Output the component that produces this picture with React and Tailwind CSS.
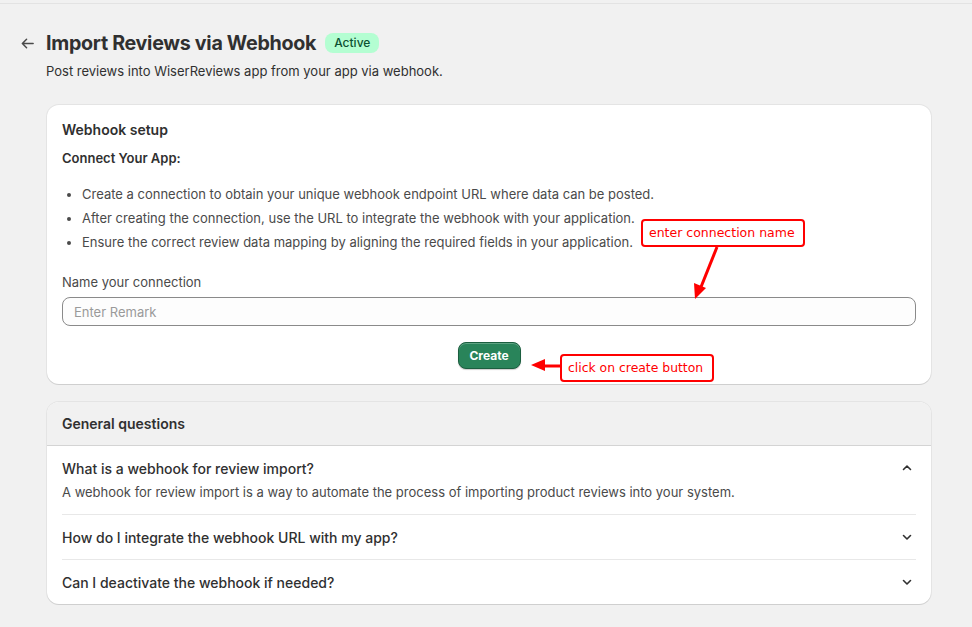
import React from "react";

const Chevron = ({ up }) => (
  <svg width="12" height="12" viewBox="0 0 12 12" fill="none" stroke="#303030" strokeWidth="1.6" strokeLinecap="round" strokeLinejoin="round">
    {up ? <path d="M2.5 7.5L6 4l3.5 3.5" /> : <path d="M2.5 4.5L6 8l3.5-3.5" />}
  </svg>
);

export default function App() {
  return (
    <div className="relative min-h-[627px] w-[972px] bg-[#f1f1f1] text-[#303030] text-[13px]" style={{ fontFamily: "Inter, 'Noto Sans', sans-serif" }}>
      <div className="h-[4px] border-b border-[#e3e3e3]" />
      <div className="pl-[20px] pr-[41px] pt-[27px]">
        <div className="flex items-center h-[24px]">
          <svg width="15" height="15" viewBox="0 0 16 16" fill="none" stroke="#4a4a4a" strokeWidth="1.6" strokeLinecap="round" strokeLinejoin="round" className="mr-[11px]">
            <path d="M14 8H2.5M7 3.5L2.5 8 7 12.5" />
          </svg>
          <h1 className="text-[19.7px] font-bold tracking-[-0.3px] text-[#303030] leading-[24px]">Import Reviews via Webhook</h1>
          <span className="ml-[9px] rounded-[8px] bg-[#b4fed2] px-[9px] h-[20px] flex items-center text-[12px] font-medium text-[#0c5132]">Active</span>
        </div>
        <p className="ml-[26px] mt-[6px] leading-[20px] text-[13px] text-[#303030]">Post reviews into WiserReviews app from your app via webhook.</p>

        <div className="ml-[27px] mr-0 mt-[24px] rounded-[12px] bg-white shadow-[0_1px_0_0_rgba(26,26,26,0.1),0_0_0_1px_rgba(26,26,26,0.06)] px-[15px] pt-[15px] pb-[15px]">
          <h2 className="font-semibold leading-[20px] text-[14px]">Webhook setup</h2>
          <p className="mt-[8px] font-semibold leading-[20px]">Connect Your App:</p>
          <ul className="mt-[16px] list-disc pl-[20px] text-[#4a4a4a] leading-[20px] flex flex-col gap-[4px]">
            <li>Create a connection to obtain your unique webhook endpoint URL where data can be posted.</li>
            <li>After creating the connection, use the URL to integrate the webhook with your application.</li>
            <li>Ensure the correct review data mapping by aligning the required fields in your application.</li>
          </ul>
          <label className="block mt-[20px] leading-[20px] text-[#4a4a4a]">Name your connection</label>
          <input
            className="mt-[5px] block w-full h-[29px] rounded-[8px] border border-[#8a8a8a] bg-[#fdfdfd] px-[11px] text-[13px] placeholder:text-[#9a9a9a] outline-none"
            placeholder="Enter Remark"
          />
          <div className="flex justify-center mt-[16px]">
            <button className="h-[27px] w-[63px] rounded-[8px] bg-[#29845a] border border-[#1b5e3f] text-white font-bold text-[12px] shadow-[inset_0_1px_0_rgba(255,255,255,0.25),0_1px_1px_rgba(0,0,0,0.2)]">Create</button>
          </div>
        </div>

        <div className="ml-[27px] mt-[18px] rounded-[12px] bg-white overflow-hidden shadow-[0_1px_0_0_rgba(26,26,26,0.1),0_0_0_1px_rgba(26,26,26,0.06)]">
          <div className="h-[44px] bg-[#f1f1f1] border-b border-[#d4d4d4] flex items-center px-[15px] font-semibold text-[14px]">General questions</div>
          <div className="px-[15px]">
            <div className="border-b border-[#e8e8e8] pt-[11px] pb-[12px]">
              <div className="flex items-center justify-between h-[22px]">
                <span className="text-[14px] font-medium text-[#303030]">What is a webhook for review import?</span>
                <span className="mr-[3px]"><Chevron up /></span>
              </div>
              <p className="mt-[3px] leading-[20px] text-[#4a4a4a]">A webhook for review import is a way to automate the process of importing product reviews into your system.</p>
            </div>
            <div className="border-b border-[#e8e8e8] h-[45px] flex items-center justify-between">
              <span className="text-[14px] font-medium">How do I integrate the webhook URL with my app?</span>
              <span className="mr-[3px]"><Chevron /></span>
            </div>
            <div className="h-[44px] flex items-center justify-between">
              <span className="text-[14px] font-medium">Can I deactivate the webhook if needed?</span>
              <span className="mr-[3px]"><Chevron /></span>
            </div>
          </div>
        </div>
      </div>

      {/* annotations */}
      <div className="absolute left-[641px] top-[219px] w-[164px] h-[28px] border-2 border-[#ff0000] rounded-[4px] bg-white text-[#ff0000] text-[12.5px] flex items-center pl-[6px]" style={{ fontFamily: "'DejaVu Sans', Verdana, sans-serif" }}>enter connection name</div>
      <div className="absolute left-[560px] top-[354px] w-[154px] h-[28px] border-2 border-[#ff0000] rounded-[4px] bg-white text-[#ff0000] text-[12.4px] flex items-center pl-[6px]" style={{ fontFamily: "'DejaVu Sans', Verdana, sans-serif" }}>click on create button</div>
      <svg className="absolute left-0 top-0 pointer-events-none" width="972" height="627">
        <line x1="717" y1="247" x2="701" y2="287" stroke="#ff0000" strokeWidth="3" />
        <polygon points="695,299 694,283 706,288" fill="#ff0000" />
        <line x1="560" y1="366" x2="542" y2="366" stroke="#ff0000" strokeWidth="3" />
        <polygon points="531,365 545,359 545,371" fill="#ff0000" />
      </svg>
    </div>
  );
}
